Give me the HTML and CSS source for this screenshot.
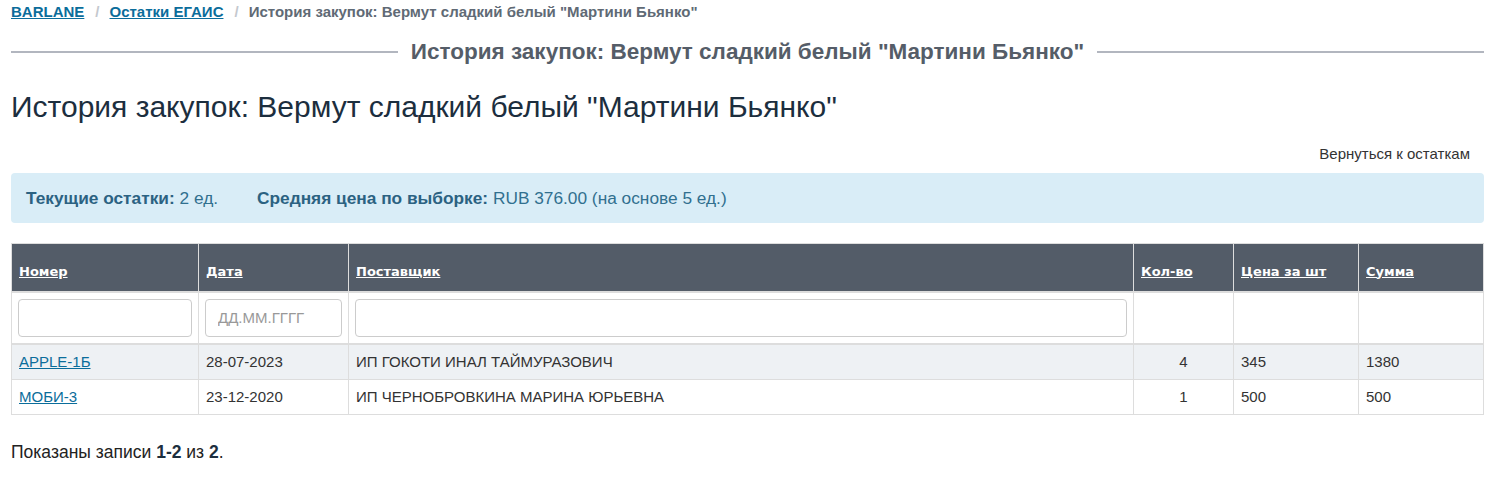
FILE: index.html
```
<!DOCTYPE html>
<html lang="ru">
<head>
    <meta charset="UTF-8">
    <title>История закупок</title>
    <link rel="stylesheet" href="styles.css">
</head>
<body>
    <div class="page">
        <ul class="breadcrumb">
            <li><a href="#">BARLANE</a></li>
            <li><a href="#">Остатки ЕГАИС</a></li>
            <li class="active">История закупок: Вермут сладкий белый "Мартини Бьянко"</li>
        </ul>

        <div class="section-title">
            <span>История закупок: Вермут сладкий белый "Мартини Бьянко"</span>
        </div>

        <h1>История закупок: Вермут сладкий белый "Мартини Бьянко"</h1>

        <div class="actions">
            <a href="#" class="back-link">Вернуться к остаткам</a>
        </div>

        <div class="alert-info">
            <span><b>Текущие остатки:</b> 2 ед.</span>
            <span><b>Средняя цена по выборке:</b> RUB 376.00 (на основе 5 ед.)</span>
        </div>

        <table class="grid">
            <colgroup>
                <col style="width: 187px">
                <col style="width: 150px">
                <col style="width: 785px">
                <col style="width: 100px">
                <col style="width: 125px">
                <col>
            </colgroup>
            <thead>
                <tr class="head-row">
                    <th><a href="#">Номер</a></th>
                    <th><a href="#">Дата</a></th>
                    <th><a href="#">Поставщик</a></th>
                    <th><a href="#">Кол-во</a></th>
                    <th><a href="#">Цена за шт</a></th>
                    <th><a href="#">Сумма</a></th>
                </tr>
                <tr class="filters">
                    <td><input type="text"></td>
                    <td><input type="text" class="date-input" placeholder="ДД.ММ.ГГГГ"></td>
                    <td><input type="text"></td>
                    <td></td>
                    <td></td>
                    <td></td>
                </tr>
            </thead>
            <tbody>
                <tr class="striped">
                    <td><a href="#">APPLE-1Б</a></td>
                    <td>28-07-2023</td>
                    <td>ИП ГОКОТИ ИНАЛ ТАЙМУРАЗОВИЧ</td>
                    <td class="num">4</td>
                    <td>345</td>
                    <td>1380</td>
                </tr>
                <tr>
                    <td><a href="#">МОБИ-3</a></td>
                    <td>23-12-2020</td>
                    <td>ИП ЧЕРНОБРОВКИНА МАРИНА ЮРЬЕВНА</td>
                    <td class="num">1</td>
                    <td>500</td>
                    <td>500</td>
                </tr>
            </tbody>
        </table>

        <div class="summary">Показаны записи <b>1-2</b> из <b>2</b>.</div>
    </div>
</body>
</html>
```

FILE: styles.css
```
* {
    margin: 0;
    padding: 0;
    box-sizing: border-box;
}

body {
    font-family: 'Liberation Sans', Arial, sans-serif;
    font-size: 15px;
    line-height: 20px;
    color: #333;
    background: #fff;
}

.page {
    padding: 0 13px 0 11px;
}

a {
    color: #0b6d9b;
}

/* breadcrumbs */
.breadcrumb {
    list-style: none;
    display: flex;
    padding-top: 2px;
    font-size: 15px;
    font-weight: bold;
    line-height: 20px;
}

.breadcrumb li + li::before {
    content: '/';
    color: #c4c8ce;
    padding: 0 10px 0 11px;
}

.breadcrumb .active {
    color: #606a75;
}

/* title with lines */
.section-title {
    display: flex;
    align-items: center;
    gap: 13px;
    margin-top: 17px;
    font-size: 22.5px;
    font-weight: bold;
    color: #555d68;
    line-height: 26px;
}

.section-title::before,
.section-title::after {
    content: '';
    flex: 1;
    height: 2px;
    background: #b2b6bf;
}

h1 {
    margin-top: 24px;
    font-size: 30px;
    font-weight: normal;
    line-height: 36px;
    color: #1c2e3e;
}

.actions {
    display: flex;
    justify-content: flex-end;
    margin-top: 19px;
    padding-right: 14px;
}

.back-link {
    color: #333;
    text-decoration: none;
}

.alert-info {
    display: flex;
    gap: 39px;
    margin-top: 9px;
    height: 50px;
    align-items: center;
    padding: 0 15px;
    background: #d9edf7;
    border-radius: 4px;
    color: #31708f;
    font-size: 17.3px;
}

.alert-info b {
    color: #2b6282;
}

/* table */
.grid {
    width: 100%;
    margin-top: 20px;
    border-collapse: collapse;
    table-layout: fixed;
    border: 1px solid #ddd;
}

.grid th,
.grid td {
    border: 1px solid #ddd;
    padding: 7px;
    text-align: left;
}

.head-row th {
    background: #535c68;
    height: 48px;
    vertical-align: bottom;
    padding-bottom: 9px;
    font-family: 'DejaVu Sans', sans-serif;
    font-size: 13px;
    border-bottom: 2px solid #ddd;
}

.head-row th a {
    color: #fff;
}

.filters td {
    height: 52px;
    border-bottom: 2px solid #ddd;
    padding: 6px;
}

.filters input {
    width: 100%;
    height: 38px;
    border: 1px solid #ccc;
    border-radius: 4px;
    padding: 6px 12px;
    font: inherit;
    font-size: 15px;
}

.filters input::placeholder {
    color: #999;
}

tbody td {
    height: 35px;
    padding: 0 7px;
    font-size: 15px;
}

tbody tr.striped td {
    background: #eef1f4;
}

tbody td.num {
    text-align: center;
}

.summary {
    margin-top: 27px;
    font-size: 17.5px;
    color: #222;
}

.summary b {
    color: #1c2e3e;
}
```
